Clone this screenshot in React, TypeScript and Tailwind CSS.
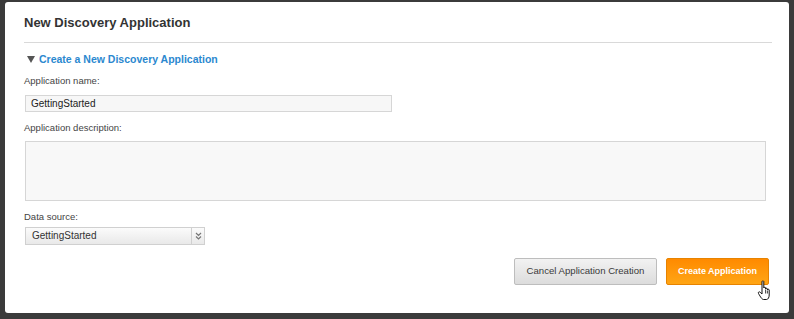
import React from 'react';

const App = () => {
  return (
    <div className="w-[794px] h-[319px] bg-[#3b3b3b] pt-[2px] pl-[5px] pr-[5px] pb-[6px] font-['Liberation_Sans',Arial,sans-serif]">
      <div className="relative h-[311px] bg-white rounded-[3px] pl-[19px] pr-[17px] pt-[13px]">
        <h2 className="text-[13px] leading-[16px] font-bold text-[#333]">New Discovery Application</h2>
        <div className="mt-[11px] border-t border-[#d9d9d9]" />
        <div className="mt-[9px] flex items-center gap-[4px] pl-[3px]">
          <svg width="8" height="7" viewBox="0 0 8 7"><path d="M0 0 L8 0 L4 7 Z" fill="#555" /></svg>
          <span className="text-[10.5px] leading-[14px] font-bold text-[#2b88cf]">Create a New Discovery Application</span>
        </div>
        <div className="mt-[8px] text-[9.5px] leading-[13px] text-[#444]">Application name:</div>
        <div className="mt-[8px] ml-[1px] w-[367px] h-[17px] border border-[#d6d6d6] bg-[#f7f7f7] px-[5px] text-[10px] leading-[15px] text-[#222]">GettingStarted</div>
        <div className="mt-[9px] text-[9.5px] leading-[13px] text-[#444]">Application description:</div>
        <div className="mt-[7px] ml-[1px] w-[741px] h-[60px] border border-[#d6d6d6] bg-[#f8f8f8]" />
        <div className="mt-[9px] text-[9.5px] leading-[13px] text-[#444]">Data source:</div>
        <div className="mt-[4px] ml-[1px] w-[180px] h-[18px] flex border border-[#d0d0d0] bg-gradient-to-b from-[#fbfbfb] to-[#e9e9e9] text-[10px] leading-[16px] text-[#333]">
          <span className="flex-1 pl-[6px]">GettingStarted</span>
          <span className="w-[13px] border-l border-[#d0d0d0] flex items-center justify-center">
            <svg width="7" height="8" viewBox="0 0 7 8"><path d="M1 1 L3.5 3.5 L6 1 M1 4.5 L3.5 7 L6 4.5" stroke="#777" strokeWidth="1.2" fill="none" /></svg>
          </span>
        </div>
        <div className="mt-[13px] flex justify-end gap-[9px] pr-[3px]">
          <button className="w-[143px] h-[27px] rounded-[2px] border border-[#bdbdbd] bg-gradient-to-b from-[#f2f2f2] to-[#dcdcdc] text-[9.6px] text-[#3a3a3a]">Cancel Application Creation</button>
          <button className="w-[103px] h-[27px] rounded-[2px] border border-[#e78300] bg-gradient-to-b from-[#ff8a00] to-[#ffa514] text-[9px] font-bold text-white">Create Application</button>
        </div>
        <svg className="absolute left-[752px] top-[278px]" width="18" height="21" viewBox="0 0 18 21">
          <path d="M5 1.5 C5 0.8 6.8 0.8 6.8 1.5 L6.8 8 C7 7 8.6 7 8.6 8 L8.6 9 C8.8 8 10.4 8 10.4 9 L10.4 10 C10.6 9 12.2 9 12.2 10 L12.2 15 C12.2 17.5 11 19.5 9.5 19.5 L6.5 19.5 C5 19.5 3.5 17 1.5 13.5 C0.8 12.2 2.2 11.2 3.2 12.3 L5 14 Z" fill="white" stroke="#111" strokeWidth="1" strokeLinejoin="round" />
          <path d="M8.6 9.5 V13.5 M10.4 10.5 V13.5" stroke="#111" strokeWidth="0.8" />
        </svg>
      </div>
    </div>
  );
};

export default App;
